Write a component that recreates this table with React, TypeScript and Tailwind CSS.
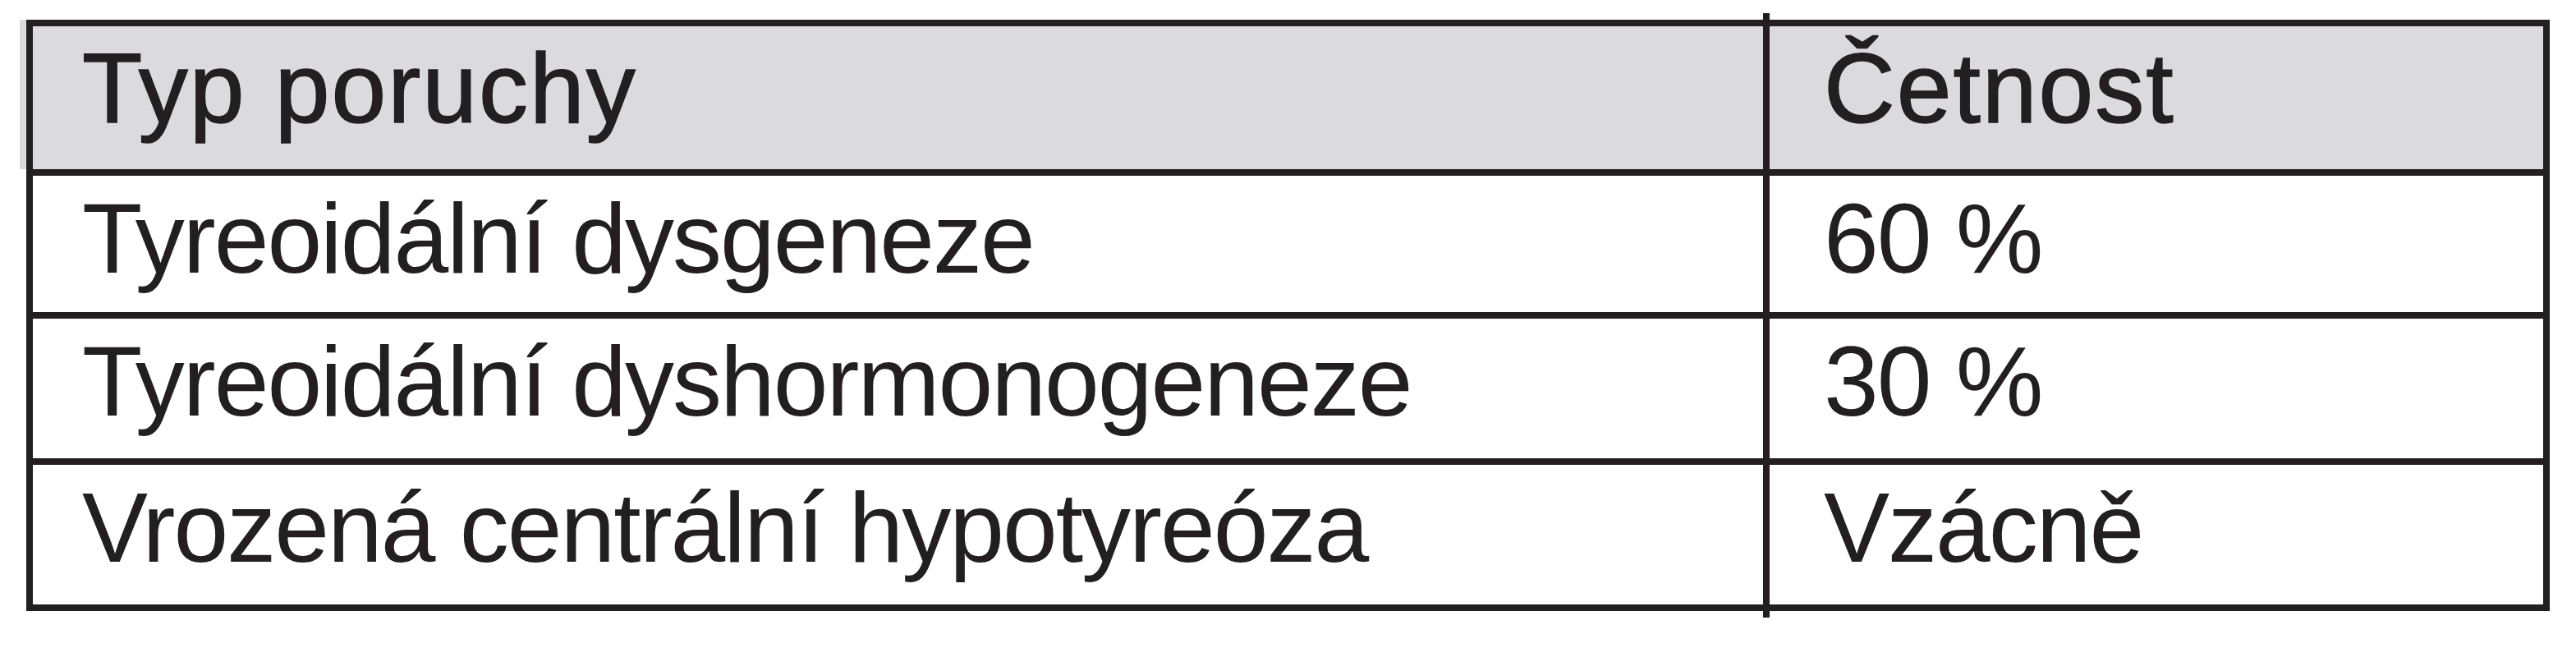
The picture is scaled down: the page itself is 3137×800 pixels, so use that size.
const rows = [
  { type: "Tyreoidální dysgeneze", freq: "60 %", h: "h-[174px]" },
  { type: "Tyreoidální dyshormonogeneze", freq: "30 %", h: "h-[178px]" },
  { type: "Vrozená centrální hypotyreóza", freq: "Vzácně", h: "h-[178px]" },
];

export default function App() {
  return (
    <div className="w-[3137px] h-[800px] bg-white pt-[24px] pl-[32px] font-['Liberation_Sans',Arial,sans-serif] text-[#231f20]">
      <div className="relative w-[3073px] border-[8px] border-[#231f20]">
        {/* header tint runs a little past the left rule */}
        <div className="absolute -left-[16px] -top-[8px] w-[8px] h-[182px] bg-[#dbdbdd]" />
        {/* column rule pokes out above and below the frame */}
        <div className="absolute left-[2107px] -top-[16px] -bottom-[16px] w-[8px] bg-[#231f20]" />

        <div className="flex h-[174px] bg-[#dbdbdd] text-[120px] leading-none tracking-[2px] [-webkit-text-stroke:1.5px_#231f20]">
          <div className="w-[2115px] pl-[60px] pt-[15px]">Typ poruchy</div>
          <div className="flex-1 pl-[66px] pt-[15px]">Četnost</div>
        </div>

        {rows.map((r) => (
          <div
            key={r.type}
            className={`flex ${r.h} border-t-[8px] border-[#231f20] text-[120px] leading-none tracking-[-2px]`}
          >
            <div className="w-[2115px] pl-[60px] pt-[16px]">{r.type}</div>
            <div className="flex-1 pl-[66px] pt-[16px]">{r.freq}</div>
          </div>
        ))}
      </div>
    </div>
  );
}
